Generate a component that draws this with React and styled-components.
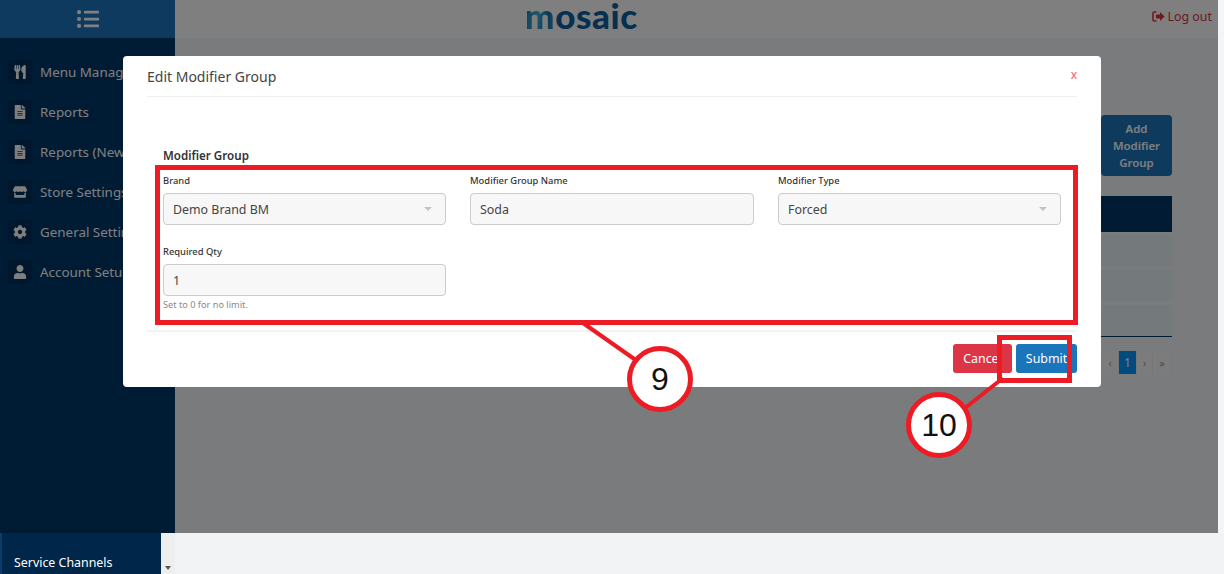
import React from 'react'
import styled, { createGlobalStyle } from 'styled-components'
import { FaCog, FaFileAlt, FaListUl, FaStore, FaUser, FaUtensils } from 'react-icons/fa'

const GlobalStyle = createGlobalStyle`
  html, body {
    margin: 0;
    padding: 0;
    overflow: hidden;
  }
  body {
    font-family: "Noto Sans", "Open Sans", sans-serif;
    background: #f2f3f5;
  }
  * {
    box-sizing: border-box;
  }
`

const Page = styled.div`
  position: relative;
  width: 1224px;
  height: 574px;
  display: flex;
  flex-direction: column;
  overflow: hidden;
`

const Main = styled.div`
  height: 533px;
  display: flex;
`

const Stage = styled.div`
  position: relative;
  width: 1218px;
  display: flex;
  background: #f5f7f8;
`

const ScrollStrip = styled.div`
  flex: 1;
  background: #f4f5f7;
`

const Sidebar = styled.aside`
  width: 175px;
  flex: none;
  background: #003668;
  display: flex;
  flex-direction: column;
`

const MenuToggle = styled.div`
  height: 38px;
  background: #1f75c0;
  display: flex;
  align-items: center;
  justify-content: center;
  color: #ffffff;
  font-size: 22px;
`

const NavList = styled.nav`
  display: flex;
  flex-direction: column;
  gap: 16px;
  padding: 22px 0 0 8px;
`

const NavItem = styled.div`
  display: flex;
  align-items: center;
  gap: 8px;
  height: 24px;
  color: #ffffff;
  font-size: 13.4px;
  white-space: nowrap;
`

const NavIcon = styled.span`
  width: 24px;
  height: 24px;
  background: #002f5c;
  border-radius: 2px;
  display: flex;
  align-items: center;
  justify-content: center;
  font-size: 14px;
`

const Content = styled.div`
  flex: 1;
  min-width: 0;
  display: flex;
  flex-direction: column;
`

const TopBar = styled.header`
  height: 38px;
  background: #ffffff;
  display: flex;
  align-items: flex-start;
  justify-content: space-between;
  padding: 0 6px 0 350px;
`

const Logo = styled.div`
  font-family: "Lato", sans-serif;
  font-weight: 900;
  font-size: 35px;
  line-height: 30px;
  color: #0f5f9f;
  letter-spacing: 0.6px;
`

const LogoM = styled.span`
  background: linear-gradient(100deg, #1173b0 0%, #3fb3d6 45%, #1173b0 70%, #2b9cc7 100%);
  -webkit-background-clip: text;
  background-clip: text;
  color: transparent;
`

const LogOut = styled.div`
  display: flex;
  align-items: center;
  gap: 3px;
  height: 32px;
  color: #dc3545;
  font-size: 12.4px;
`

const Body = styled.div`
  flex: 1;
  display: flex;
  flex-direction: column;
  align-items: flex-end;
  padding: 77px 46px 0 24px;
`

const AddButton = styled.div`
  width: 71px;
  height: 61px;
  background: #1c75bc;
  border-radius: 4px;
  color: #ffffff;
  font-size: 11.4px;
  font-weight: 600;
  line-height: 17px;
  text-align: center;
  padding: 5px 8px;
`

const Table = styled.div`
  width: 100%;
  margin-top: 20px;
  display: flex;
  flex-direction: column;
  border-bottom: 1px solid #003668;
`

const TableHead = styled.div`
  height: 36px;
  background: #003666;
  margin-bottom: 3px;
`

const TableRow = styled.div`
  height: 31px;
  background: #e8f5f8;
  & + & {
    margin-top: 4px;
  }
`

const Pager = styled.div`
  display: flex;
  margin-top: 14px;
  height: 23px;
  border-radius: 3px;
  background: #f8f8f8;
  color: #999999;
  font-size: 10px;
`

const PagerCell = styled.span`
  width: ${({ $w }) => $w}px;
  display: flex;
  align-items: center;
  justify-content: center;
  background: ${({ $active }) => ($active ? '#0296ff' : 'transparent')};
  color: ${({ $active }) => ($active ? '#ffffff' : '#999999')};
  font-size: ${({ $active }) => ($active ? 12 : 10)}px;
  border-right: 1px solid #eeeeee;
`

const Overlay = styled.div`
  position: absolute;
  inset: 0;
  background: rgba(0, 0, 0, 0.5);
`

const Modal = styled.section`
  position: absolute;
  left: 123px;
  top: 56px;
  width: 978px;
  height: 331px;
  background: #ffffff;
  border-radius: 4px;
  padding: 0 24px;
  display: flex;
  flex-direction: column;
`

const ModalHeader = styled.div`
  height: 41px;
  flex: none;
  border-bottom: 1px solid #eeeeee;
  display: flex;
  align-items: flex-start;
  justify-content: space-between;
  padding-top: 10px;
`

const ModalTitle = styled.h2`
  margin: 0;
  font-size: 14px;
  line-height: 21px;
  font-weight: 400;
  color: #444444;
`

const CloseX = styled.span`
  font-size: 12px;
  line-height: 18px;
  color: #f25c5c;
  padding-right: 0;
`

const ModalBody = styled.div`
  flex: none;
  height: 235px;
  padding: 50px 16px 0;
  border-bottom: 2px solid #f2f2f2;
`

const SectionTitle = styled.h3`
  margin: 0 0 9px;
  font-size: 11.6px;
  line-height: 18px;
  font-weight: 600;
  color: #333333;
`

const FieldGrid = styled.div`
  display: grid;
  grid-template-columns: 283px 284px 283px;
  column-gap: 24px;
  row-gap: 20px;
`

const Field = styled.div`
  display: flex;
  flex-direction: column;
`

const Label = styled.label`
  font-size: 9.4px;
  line-height: 14px;
  font-weight: 500;
  color: #333333;
  margin-bottom: 5px;
`

const SelectBox = styled.div`
  height: 32px;
  border: 1px solid #cccccc;
  border-radius: 4px;
  background: #f7f7f7;
  display: flex;
  align-items: center;
  justify-content: space-between;
  padding: 0 13px 0 9px;
  font-size: 12.4px;
  color: #444444;
`

const Caret = styled.span`
  width: 0;
  height: 0;
  border-left: 4px solid transparent;
  border-right: 4px solid transparent;
  border-top: 4px solid #c4c4c4;
`

const TextInput = styled.input`
  height: 32px;
  width: 100%;
  border: 1px solid #cccccc;
  border-radius: 4px;
  background: #f7f7f7;
  padding: 0 9px;
  font-family: inherit;
  font-size: 12.4px;
  color: #444444;
  outline: none;
`

const HelpText = styled.small`
  font-size: 9.2px;
  line-height: 14px;
  margin-top: 2px;
  color: #8a8a8a;
`

const ModalFooter = styled.div`
  display: flex;
  justify-content: flex-end;
  gap: 4px;
  padding: 12px 12px 0 0;
  margin-right: -12px;
`

const FooterButton = styled.button`
  height: 29px;
  width: ${({ $w }) => $w}px;
  border: 0;
  border-radius: 3px;
  background: ${({ $color }) => $color};
  color: #ffffff;
  font-family: inherit;
  font-size: 12.4px;
  padding: 0;
`

const Highlight = styled.div`
  position: absolute;
  left: ${({ $x }) => $x}px;
  top: ${({ $y }) => $y}px;
  width: ${({ $w }) => $w}px;
  height: ${({ $h }) => $h}px;
  border: 5px solid #ed1c24;
`

const Callouts = styled.svg`
  position: absolute;
  inset: 0;
  pointer-events: none;
`

const Badge = styled.div`
  position: absolute;
  left: ${({ $x }) => $x - 33}px;
  top: ${({ $y }) => $y - 33}px;
  width: 66px;
  height: 66px;
  border-radius: 50%;
  border: 5px solid #ed1c24;
  background: #ffffff;
  color: #111111;
  font-family: "Liberation Sans", Arial, sans-serif;
  font-size: 32px;
  display: flex;
  align-items: center;
  justify-content: center;
`

const BottomBar = styled.footer`
  flex: 1;
  display: flex;
  background: #f2f3f5;
`

const ChannelTab = styled.div`
  width: 161px;
  background: #00264a;
  border-left: 2px solid #0b3d6b;
  color: #ffffff;
  font-size: 12.4px;
  padding: 21px 0 0 12px;
  line-height: 18px;
`

const TabScroll = styled.div`
  width: 14px;
  background: #eeeeee;
  display: flex;
  align-items: flex-end;
  justify-content: center;
  padding-bottom: 4px;
`

const TabCaret = styled.span`
  width: 0;
  height: 0;
  border-left: 3.5px solid transparent;
  border-right: 3.5px solid transparent;
  border-top: 4px solid #555555;
`

const navItems = [
  { icon: <FaUtensils />, label: 'Menu Management' },
  { icon: <FaFileAlt />, label: 'Reports' },
  { icon: <FaFileAlt />, label: 'Reports (New)' },
  { icon: <FaStore />, label: 'Store Settings' },
  { icon: <FaCog />, label: 'General Settings' },
  { icon: <FaUser />, label: 'Account Setup' },
]

const SignOutIcon = () => (
  <svg width="13" height="11" viewBox="0 0 13 11">
    <path d="M4.5 1H2a1 1 0 0 0-1 1v7a1 1 0 0 0 1 1h2.5" fill="none" stroke="currentColor" strokeWidth="1.6" />
    <path d="M4 3.6h4V1l4.6 4.5L8 10V7.4H4z" fill="currentColor" />
  </svg>
)

const App = () => {
  return (
    <Page>
      <GlobalStyle />
      <Main>
        <Stage>
          <Sidebar>
            <MenuToggle>
              <FaListUl />
            </MenuToggle>
            <NavList>
              {navItems.map(item => (
                <NavItem key={item.label}>
                  <NavIcon>{item.icon}</NavIcon>
                  {item.label}
                </NavItem>
              ))}
            </NavList>
          </Sidebar>
          <Content>
            <TopBar>
              <Logo>
                <LogoM>m</LogoM>osaic
              </Logo>
              <LogOut>
                <SignOutIcon />
                Log out
              </LogOut>
            </TopBar>
            <Body>
              <AddButton>Add Modifier Group</AddButton>
              <Table>
                <TableHead />
                <TableRow />
                <TableRow />
                <TableRow />
              </Table>
              <Pager>
                <PagerCell $w={17}>‹</PagerCell>
                <PagerCell $w={18} $active>
                  1
                </PagerCell>
                <PagerCell $w={16}>›</PagerCell>
                <PagerCell $w={19}>»</PagerCell>
              </Pager>
            </Body>
          </Content>
          <Overlay />
          <Modal>
            <ModalHeader>
              <ModalTitle>Edit Modifier Group</ModalTitle>
              <CloseX>x</CloseX>
            </ModalHeader>
            <ModalBody>
              <SectionTitle>Modifier Group</SectionTitle>
              <FieldGrid>
                <Field>
                  <Label>Brand</Label>
                  <SelectBox>
                    Demo Brand BM
                    <Caret />
                  </SelectBox>
                </Field>
                <Field>
                  <Label>Modifier Group Name</Label>
                  <TextInput readOnly value="Soda" />
                </Field>
                <Field>
                  <Label>Modifier Type</Label>
                  <SelectBox>
                    Forced
                    <Caret />
                  </SelectBox>
                </Field>
                <Field>
                  <Label>Required Qty</Label>
                  <TextInput readOnly value="1" />
                  <HelpText>Set to 0 for no limit.</HelpText>
                </Field>
              </FieldGrid>
            </ModalBody>
            <ModalFooter>
              <FooterButton $w={59} $color="#dc3545">
                Cancel
              </FooterButton>
              <FooterButton $w={61} $color="#1b75bb">
                Submit
              </FooterButton>
            </ModalFooter>
          </Modal>
        </Stage>
        <ScrollStrip />
      </Main>
      <BottomBar>
        <ChannelTab>Service Channels</ChannelTab>
        <TabScroll>
          <TabCaret />
        </TabScroll>
      </BottomBar>
      <Callouts width="1224" height="574">
        <line x1="583" y1="323" x2="640" y2="363" stroke="#ed1c24" strokeWidth="4" />
        <line x1="1003" y1="378" x2="960" y2="412" stroke="#ed1c24" strokeWidth="4" />
      </Callouts>
      <Highlight $x={155} $y={165} $w={923} $h={160} />
      <Highlight $x={997} $y={335} $w={75} $h={48} />
      <Badge $x={660} $y={379}>9</Badge>
      <Badge $x={939} $y={425}>10</Badge>
    </Page>
  )
}

export default App
